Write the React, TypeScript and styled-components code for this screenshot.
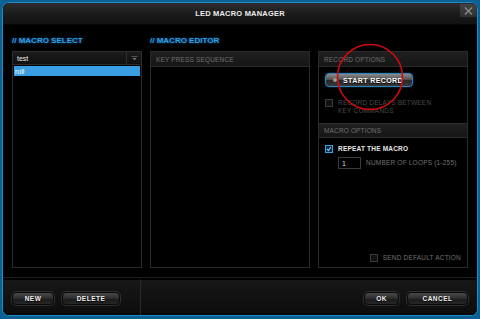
import React from 'react'
import styled, { createGlobalStyle } from 'styled-components'

const GlobalStyle = createGlobalStyle`
  html, body {
    margin: 0;
    padding: 0;
    background: #0a5a84;
  }
  body {
    font-family: "Liberation Sans", Arial, sans-serif;
  }
`

const Frame = styled.div`
  width: 480px;
  height: 319px;
  box-sizing: border-box;
  padding: 2px 2px 3px 2px;
  background: #0c6192;
`

const Window = styled.div`
  position: relative;
  height: 100%;
  box-sizing: border-box;
  border: 1px solid #1a8cc9;
  border-radius: 7px;
  background: #000;
  overflow: hidden;
  display: flex;
  flex-direction: column;
`

const TitleBar = styled.div`
  height: 22px;
  flex: none;
  display: flex;
  align-items: center;
  justify-content: center;
  box-sizing: border-box;
  background: linear-gradient(#2d2d2d, #1a1a1a 55%, #121212);
  border-bottom: 1px solid #070707;
  color: #ececec;
  font-size: 7.5px;
  font-weight: bold;
  letter-spacing: 0.2px;
`

const CloseButton = styled.button`
  position: absolute;
  top: 1px;
  right: 0;
  width: 17px;
  height: 13px;
  padding: 0;
  border: none;
  border-radius: 0 3px 0 2px;
  background: linear-gradient(#444, #2e2e2e);
  display: flex;
  align-items: center;
  justify-content: center;
`

const Body = styled.div`
  flex: 1;
  display: grid;
  grid-template-columns: 130px 160px 150px;
  grid-template-rows: 26px 1fr;
  column-gap: 8px;
  padding: 0 9px 9px 9px;
`

const SectionTitle = styled.div`
  align-self: center;
  padding-top: 4px;
  color: #2f9fe6;
  font-size: 8px;
  font-weight: bold;
  text-shadow: 0 0 3px rgba(40, 150, 230, 0.7);
`

const Column = styled.div`
  display: flex;
  flex-direction: column;
  min-height: 0;
`

const Dropdown = styled.div`
  height: 14px;
  flex: none;
  display: flex;
  box-sizing: border-box;
  border: 1px solid #2c2c2c;
  background: linear-gradient(#1c1c1c, #101010);
  color: #eee;
  font-size: 7px;
`

const DropdownValue = styled.div`
  flex: 1;
  display: flex;
  align-items: center;
  padding-left: 4px;
`

const DropdownArrow = styled.div`
  width: 14px;
  border-left: 1px solid #2c2c2c;
  display: flex;
  align-items: center;
  justify-content: center;
`

const List = styled.div`
  flex: 1;
  box-sizing: border-box;
  border: 1px solid #2a2a2a;
  border-top: none;
  padding: 1px 1px;
`

const ListItem = styled.div<{ $selected?: boolean }>`
  height: 10px;
  display: flex;
  align-items: center;
  padding-left: 1px;
  background: ${p => (p.$selected ? '#3a9fe2' : 'transparent')};
  color: #fff;
  font-size: 7px;
`

const Panel = styled.div`
  flex: 1;
  box-sizing: border-box;
  border: 1px solid #2a2a2a;
  display: flex;
  flex-direction: column;
`

const PanelHeader = styled.div<{ $divider?: boolean }>`
  height: 15px;
  flex: none;
  display: flex;
  align-items: center;
  box-sizing: border-box;
  padding-left: 5px;
  background: linear-gradient(#1f1f1f, #161616);
  border-top: ${p => (p.$divider ? '1px solid #2e2e2e' : 'none')};
  border-bottom: 1px solid #2a2a2a;
  color: #6f6f6f;
  font-size: 6.5px;
  letter-spacing: 0.15px;
`

const Section = styled.div<{ $grow?: boolean }>`
  flex: ${p => (p.$grow ? 1 : 'none')};
  display: flex;
  flex-direction: column;
  padding: 6px 6px 0 6px;
`

const RecordButton = styled.button`
  position: relative;
  width: 88px;
  height: 14px;
  padding: 0 0 0 8px;
  box-sizing: border-box;
  border: 1px solid #2b82bd;
  border-radius: 4px;
  background: linear-gradient(#8a8a8a, #555 45%, #262626 55%, #3a3a3a);
  color: #fff;
  font-family: inherit;
  font-size: 7px;
  font-weight: bold;
  letter-spacing: 0.4px;
  text-shadow: 0 1px 1px #000;
  box-shadow: 0 0 2px rgba(40, 140, 210, 0.6);

  &::before {
    content: '';
    position: absolute;
    left: 7px;
    top: 4px;
    width: 4px;
    height: 4px;
    border-radius: 50%;
    background: #9a9a9a;
  }
`

const CheckRow = styled.div<{ $top?: number; $end?: boolean }>`
  display: flex;
  align-items: flex-start;
  gap: 5px;
  margin-top: ${p => p.$top ?? 0}px;
  justify-content: ${p => (p.$end ? 'flex-end' : 'flex-start')};
`

const Box = styled.div<{ $checked?: boolean }>`
  width: 8px;
  height: 8px;
  flex: none;
  box-sizing: border-box;
  border: 1px solid ${p => (p.$checked ? '#3a9fe2' : '#3a3a3a')};
  background: ${p => (p.$checked ? '#0d2b40' : '#111')};
  display: flex;
  align-items: center;
  justify-content: center;
`

const Label = styled.div<{ $tone?: 'dim' | 'mid' | 'bright' }>`
  font-size: 6.5px;
  line-height: 8px;
  letter-spacing: 0.2px;
  font-weight: ${p => (p.$tone === 'bright' ? 'bold' : 'normal')};
  color: ${p => (p.$tone === 'bright' ? '#e6e6e6' : p.$tone === 'dim' ? '#4a4a4a' : '#707070')};
`

const LoopRow = styled.div`
  display: flex;
  align-items: center;
  gap: 5px;
  margin-top: 4px;
  padding-left: 13px;
`

const NumberInput = styled.div`
  width: 23px;
  height: 12px;
  box-sizing: border-box;
  border: 1px solid #3a3a3a;
  background: #000;
  color: #ddd;
  font-size: 7px;
  display: flex;
  align-items: center;
  padding-left: 3px;
`

const Spacer = styled.div`
  flex: 1;
`

const BottomBar = styled.div`
  height: 38px;
  flex: none;
  box-sizing: border-box;
  display: flex;
  border-top: 1px solid #1f1f1f;
  background: linear-gradient(#000 0, #000 2px, #171717 2px, #0d0d0d 34px, #050505);
`

const BarSection = styled.div<{ $end?: boolean }>`
  flex: ${p => (p.$end ? 1 : 'none')};
  width: ${p => (p.$end ? 'auto' : '138px')};
  box-sizing: border-box;
  display: flex;
  gap: 8px;
  justify-content: ${p => (p.$end ? 'flex-end' : 'flex-start')};
  padding: 12px 9px 0 9px;
  border-right: ${p => (p.$end ? 'none' : '1px solid #2a2a2a')};
  border-top: 2px solid transparent;
`

const BarButton = styled.button<{ $w: number }>`
  width: ${p => p.$w}px;
  height: 13px;
  padding: 0;
  box-sizing: border-box;
  border: 1px solid #0a0a0a;
  border-radius: 4px;
  background: linear-gradient(#4a4a4a, #2c2c2c 50%, #1b1b1b 55%, #262626);
  box-shadow: 0 0 0 1px #2e2e2e;
  color: #f0f0f0;
  font-family: inherit;
  font-size: 6.5px;
  font-weight: bold;
  letter-spacing: 0.5px;
  text-shadow: 0 1px 1px #000;
`

const Annotation = styled.svg`
  position: absolute;
  left: 333px;
  top: 40px;
  pointer-events: none;
`

export default function App() {
  return (
    <Frame>
      <GlobalStyle />
      <Window>
        <TitleBar>
          LED MACRO MANAGER
          <CloseButton aria-label="close">
            <svg width="9" height="8" viewBox="0 0 9 8">
              <path d="M1 0.5 L8 7.5 M8 0.5 L1 7.5" stroke="#8a8a8a" strokeWidth="1.4" />
            </svg>
          </CloseButton>
        </TitleBar>

        <Body>
          <SectionTitle>// MACRO SELECT</SectionTitle>
          <SectionTitle>// MACRO EDITOR</SectionTitle>
          <div />

          <Column>
            <Dropdown>
              <DropdownValue>test</DropdownValue>
              <DropdownArrow>
                <svg width="7" height="5" viewBox="0 0 7 5">
                  <path d="M0.5 0.5 H6.5" stroke="#555" strokeWidth="1" />
                  <path d="M1.5 2 L5.5 2 L3.5 4.5 Z" fill="#777" />
                </svg>
              </DropdownArrow>
            </Dropdown>
            <List>
              <ListItem $selected>roll</ListItem>
            </List>
          </Column>

          <Column>
            <Panel>
              <PanelHeader>KEY PRESS SEQUENCE</PanelHeader>
            </Panel>
          </Column>

          <Column>
            <Panel>
              <PanelHeader>RECORD OPTIONS</PanelHeader>
              <Section>
                <RecordButton>START RECORD</RecordButton>
                <CheckRow $top={12}>
                  <Box />
                  <Label $tone="dim">
                    RECORD DELAYS BETWEEN
                    <br />
                    KEY COMMANDS
                  </Label>
                </CheckRow>
                <div style={{ height: 8 }} />
              </Section>
              <PanelHeader $divider>MACRO OPTIONS</PanelHeader>
              <Section $grow>
                <CheckRow $top={1}>
                  <Box $checked>
                    <svg width="6" height="6" viewBox="0 0 6 6">
                      <path d="M1 3 L2.5 4.5 L5 1" stroke="#6fc0f2" strokeWidth="1.2" fill="none" />
                    </svg>
                  </Box>
                  <Label $tone="bright">REPEAT THE MACRO</Label>
                </CheckRow>
                <LoopRow>
                  <NumberInput>1</NumberInput>
                  <Label>NUMBER OF LOOPS (1-255)</Label>
                </LoopRow>
                <Spacer />
                <CheckRow $end>
                  <Box />
                  <Label>SEND DEFAULT ACTION</Label>
                </CheckRow>
                <div style={{ height: 5 }} />
              </Section>
            </Panel>
          </Column>
        </Body>

        <BottomBar>
          <BarSection>
            <BarButton $w={42}>NEW</BarButton>
            <BarButton $w={58}>DELETE</BarButton>
          </BarSection>
          <BarSection $end>
            <BarButton $w={35}>OK</BarButton>
            <BarButton $w={61}>CANCEL</BarButton>
          </BarSection>
        </BottomBar>

        <Annotation width="68" height="68" viewBox="0 0 68 68">
          <ellipse cx="34" cy="34" rx="32.5" ry="32.5" fill="none" stroke="#d40a0a" strokeWidth="1.6" />
        </Annotation>
      </Window>
    </Frame>
  )
}
